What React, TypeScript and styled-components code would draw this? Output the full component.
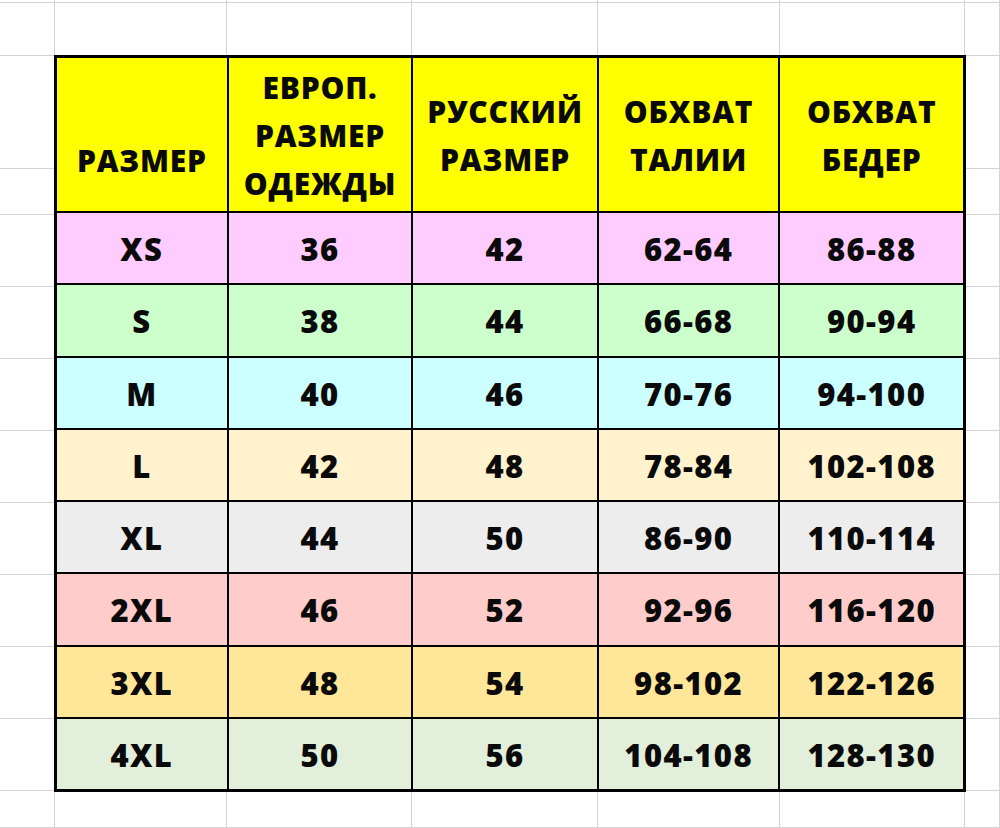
import React from 'react';
import styled, { createGlobalStyle } from 'styled-components';

const GlobalStyle = createGlobalStyle`
    html, body {
        margin: 0;
        padding: 0;
        background: #ffffff;
    }
    * {
        box-sizing: border-box;
    }
`;

// sheet columns / rows, taken from the spreadsheet gridlines
const COLS = [55, 172, 185, 186, 182, 185];
const ROWS = [3, 53, 113, 46, 72, 72, 72, 72, 72, 72, 72, 72];

const Sheet = styled.div`
    width: 1000px;
    height: 828px;
    overflow: hidden;
    display: grid;
    grid-template-columns: ${COLS.map((c) => `${c}px`).join(' ')} 1fr;
    grid-template-rows: ${ROWS.map((r) => `${r}px`).join(' ')} 1fr;
    font-family: "Open Sans", "Noto Sans", "Liberation Sans", sans-serif;
`;

const GridCell = styled.div<{ $col: number; $row: number }>`
    grid-column: ${(p) => p.$col};
    grid-row: ${(p) => p.$row};
    border-right: 1px solid #d4d4d4;
    border-bottom: 1px solid #d4d4d4;
`;

const Table = styled.div`
    grid-column: 2 / 7;
    grid-row: 3 / 13;
    display: grid;
    grid-template-columns: 172fr 185fr 186fr 182fr 185fr;
    grid-template-rows: 157fr repeat(8, 72fr);
    gap: 2px;
    background: #000000;
    border: 3px solid #000000;
    margin: -1px;
`;

const HeadCell = styled.div<{ $shift: number }>`
    background: #ffff00;
    display: flex;
    align-items: center;
    justify-content: center;
    text-align: center;
    font-weight: 800;
    font-size: 30px;
    letter-spacing: 0.8px;
    line-height: 48px;
    color: #0a0a0a;
    padding-top: ${(p) => 2 + p.$shift}px;
`;

const Cell = styled.div<{ $bg: string }>`
    background: ${(p) => p.$bg};
    display: flex;
    align-items: center;
    justify-content: center;
    font-weight: 800;
    font-size: 31px;
    letter-spacing: 1.4px;
    color: #0a0a0a;
    padding-top: 2px;
`;

const headers = [
    { lines: ['РАЗМЕР'], shift: 50 },
    { lines: ['ЕВРОП.', 'РАЗМЕР', 'ОДЕЖДЫ'], shift: 0 },
    { lines: ['РУССКИЙ', 'РАЗМЕР'], shift: 0 },
    { lines: ['ОБХВАТ', 'ТАЛИИ'], shift: 0 },
    { lines: ['ОБХВАТ', 'БЕДЕР'], shift: 0 },
];

const rows = [
    { bg: '#ffccff', cells: ['XS', '36', '42', '62-64', '86-88'] },
    { bg: '#ccffcc', cells: ['S', '38', '44', '66-68', '90-94'] },
    { bg: '#ccffff', cells: ['M', '40', '46', '70-76', '94-100'] },
    { bg: '#fff2cc', cells: ['L', '42', '48', '78-84', '102-108'] },
    { bg: '#ededed', cells: ['XL', '44', '50', '86-90', '110-114'] },
    { bg: '#ffcccc', cells: ['2XL', '46', '52', '92-96', '116-120'] },
    { bg: '#ffe699', cells: ['3XL', '48', '54', '98-102', '122-126'] },
    { bg: '#e2efda', cells: ['4XL', '50', '56', '104-108', '128-130'] },
];

export default function App() {
    // empty spreadsheet cells around the table
    const gridCells: React.ReactNode[] = [];
    const rowCount = ROWS.length + 1;
    const colCount = COLS.length + 1;
    for (let r = 1; r <= rowCount; r++) {
        for (let c = 1; c <= colCount; c++) {
            const insideTable = c >= 2 && c <= 6 && r >= 3 && r <= 12;
            if (!insideTable) {
                gridCells.push(<GridCell key={`${r}-${c}`} $col={c} $row={r} />);
            }
        }
    }

    return (
        <>
            <GlobalStyle />
            <Sheet>
                {gridCells}
                <Table>
                    {headers.map((h, i) => (
                        <HeadCell key={`h${i}`} $shift={h.shift}>
                            <div>
                                {h.lines.map((l) => (
                                    <div key={l}>{l}</div>
                                ))}
                            </div>
                        </HeadCell>
                    ))}
                    {rows.map((row) =>
                        row.cells.map((text, i) => (
                            <Cell key={`${row.cells[0]}-${i}`} $bg={row.bg}>
                                {text}
                            </Cell>
                        ))
                    )}
                </Table>
            </Sheet>
        </>
    );
}
